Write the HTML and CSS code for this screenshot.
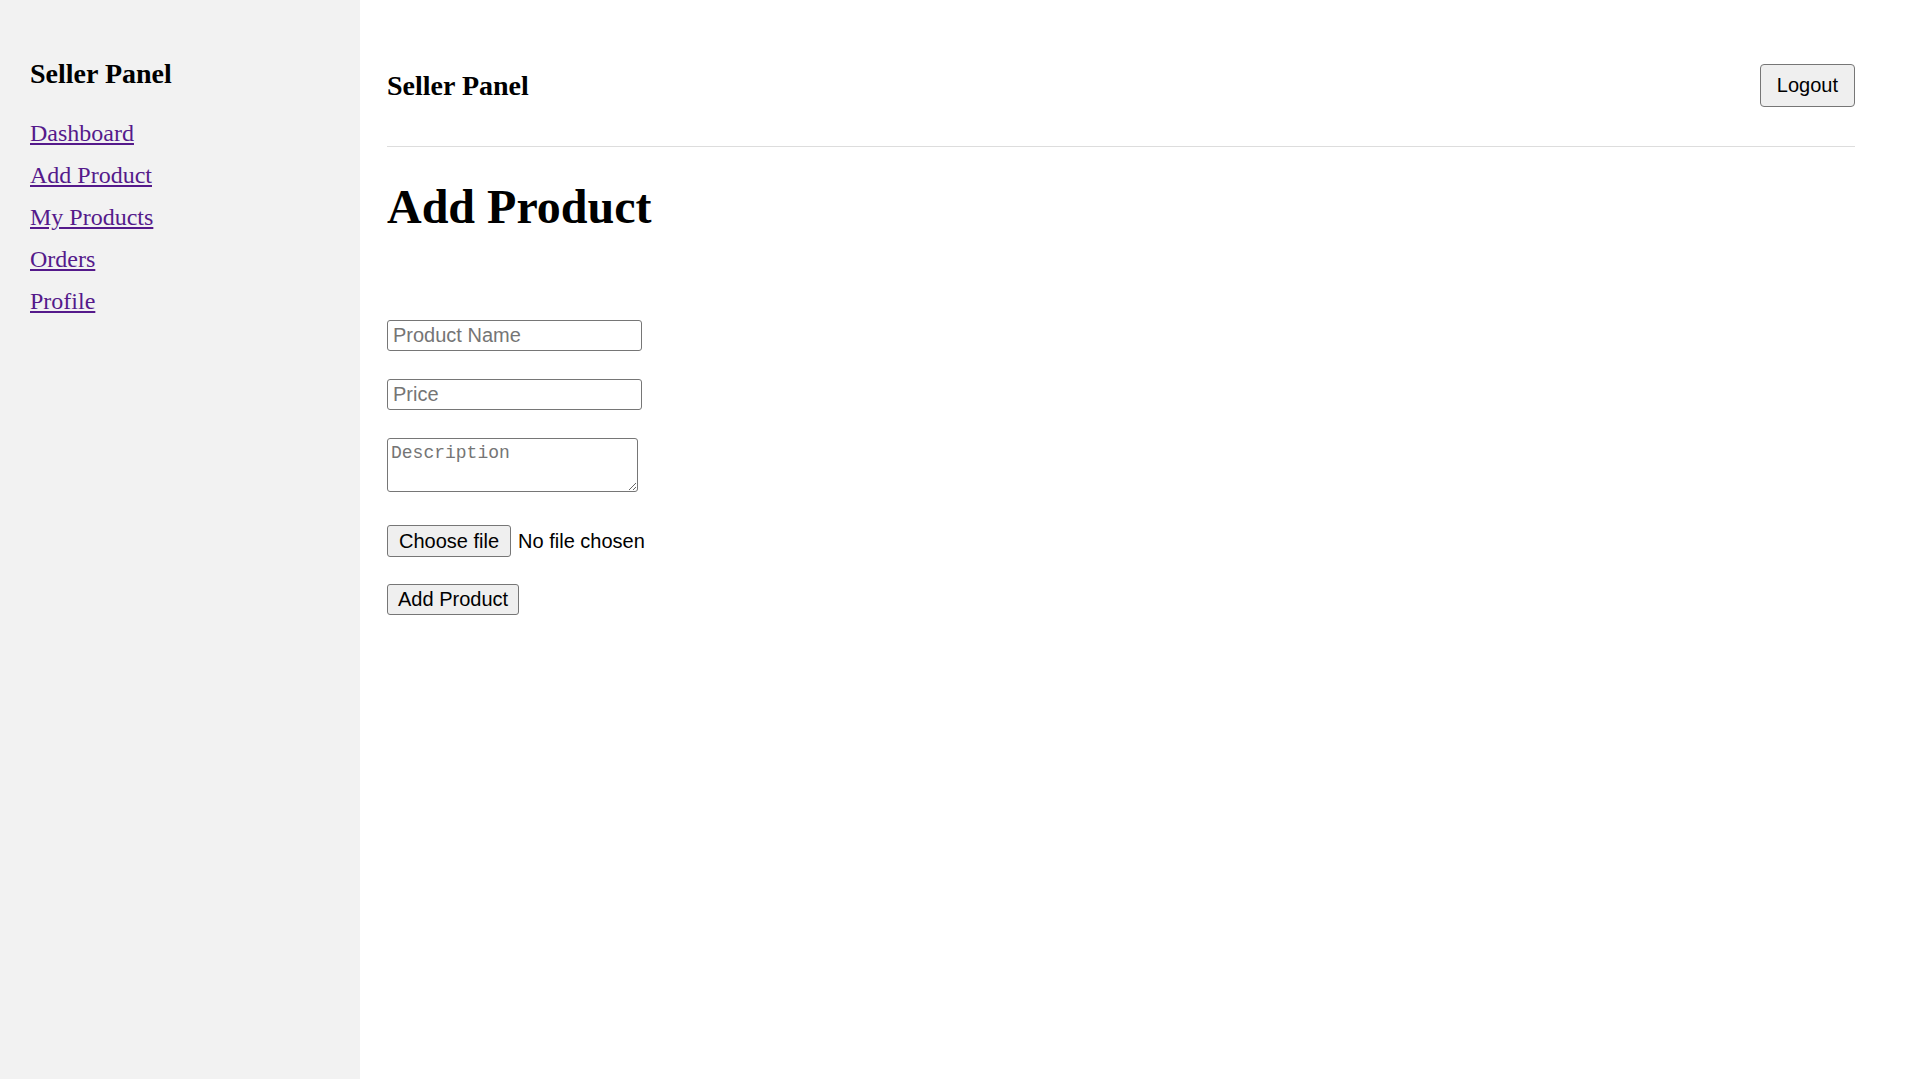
FILE: index.html
```html
<!DOCTYPE html>
<html lang="en">
<head>
<meta charset="utf-8">
<title>Seller Panel - Add Product</title>
<link rel="stylesheet" href="styles.css">
</head>
<body>
  <aside class="sidebar">
    <h3 class="brand">Seller Panel</h3>
    <nav class="nav">
      <a href="#dashboard">Dashboard</a>
      <a href="#add-product">Add Product</a>
      <a href="#my-products">My Products</a>
      <a href="#orders">Orders</a>
      <a href="#profile">Profile</a>
    </nav>
  </aside>
  <main class="main">
    <header class="topbar">
      <h3 class="topbar-title">Seller Panel</h3>
      <button class="btn btn-logout" type="button">Logout</button>
    </header>
    <h1 class="page-title">Add Product</h1>
    <form class="product-form">
      <input class="field field-name" type="text" placeholder="Product Name">
      <input class="field field-price" type="text" placeholder="Price">
      <textarea class="field-desc" placeholder="Description"></textarea>
      <div class="file-row">
        <label class="btn btn-file">Choose file<input class="file-input" type="file"></label>
        <span class="file-status">No file chosen</span>
      </div>
      <button class="btn btn-submit" type="submit">Add Product</button>
    </form>
  </main>
</body>
</html>
```

FILE: styles.css
```css
html, body {
  margin: 0;
  padding: 0;
}

body {
  display: flex;
  align-items: flex-start;
  font-family: "Liberation Serif", "Times New Roman", serif;
  color: #000;
  background: #fff;
}

.sidebar {
  width: 300px;
  min-height: 100vh;
  padding: 30px 30px 15px;
  background: #f2f2f2;
  flex-shrink: 0;
}

.brand {
  font-size: 28px;
  font-weight: bold;
  margin: 28px 0 29.5px;
}

.nav {
  display: flex;
  flex-direction: column;
  align-items: flex-start;
  gap: 15.2px;
}

.nav a {
  font-size: 24px;
  color: #551a8b;
  text-decoration: underline;
}

.main {
  flex: 1;
  padding: 42px 64px 0 27px;
  min-width: 0;
}

.topbar {
  display: flex;
  align-items: center;
  justify-content: space-between;
  padding-bottom: 16px;
  border-bottom: 1px solid #dddddd;
}

.topbar-title {
  font-size: 28px;
  font-weight: bold;
  margin: 28px 0;
}

.btn {
  font-family: "Liberation Sans", Arial, sans-serif;
  font-size: 20px;
  line-height: 23px;
  color: #000;
  background: #efefef;
  border: 1px solid #767676;
  border-radius: 3px;
  cursor: pointer;
  box-sizing: border-box;
}

.btn-logout {
  padding: 9px 16px;
  border-radius: 4px;
  margin-top: -2px;
}

.page-title {
  font-size: 48px;
  font-weight: bold;
  margin: 32px 0;
}

.product-form {
  margin-top: 86px;
  display: flex;
  flex-direction: column;
  align-items: flex-start;
}

.field {
  width: 255px;
  height: 31px;
  box-sizing: border-box;
  padding: 3px 5px;
  font-family: "Liberation Sans", Arial, sans-serif;
  font-size: 20px;
  line-height: 23px;
  border: 1px solid #767676;
  border-radius: 3px;
  margin: 0 0 28px;
  outline: none;
}

.field::placeholder,
.field-desc::placeholder {
  color: #757575;
}

.field-desc {
  width: 251px;
  height: 54px;
  box-sizing: border-box;
  padding: 4px 3px;
  font-family: "Liberation Mono", "DejaVu Sans Mono", monospace;
  font-size: 18px;
  line-height: 21px;
  border: 1px solid #767676;
  border-radius: 3px;
  margin: 0 0 33px;
  resize: both;
}

.file-row {
  display: flex;
  align-items: center;
  gap: 7px;
  margin-bottom: 27px;
}

.btn-file {
  display: inline-block;
  padding: 4px 11px;
  height: 32px;
}

.file-input {
  display: none;
}

.file-status {
  font-family: "Liberation Sans", Arial, sans-serif;
  font-size: 20px;
  line-height: 23px;
}

.btn-submit {
  padding: 3px 10px;
  height: 31px;
}
```
